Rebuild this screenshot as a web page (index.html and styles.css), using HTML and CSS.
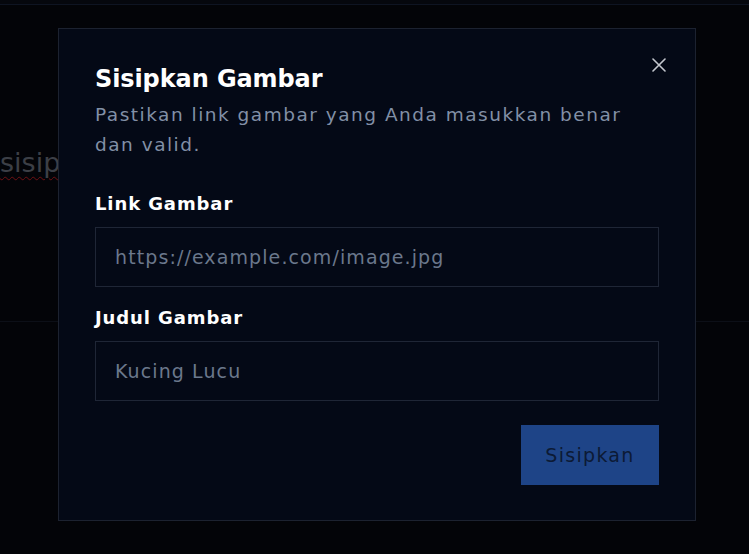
FILE: index.html
```html
<!DOCTYPE html>
<html lang="id">
<head>
<meta charset="utf-8">
<title>Sisipkan Gambar</title>
<link rel="stylesheet" href="styles.css">
</head>
<body>
<div class="page">
  <header class="topbar"></header>
  <section class="editor">
    <p class="editor-text"><span class="misspelled">sisipkan</span></p>
  </section>
  <div class="editor-footer"></div>
</div>

<div class="overlay">
  <div class="modal" role="dialog" aria-labelledby="modal-title">
    <button class="close" aria-label="Tutup">
      <svg width="14" height="14" viewBox="0 0 14 14"><path d="M1 1L13 13M13 1L1 13" stroke="currentColor" stroke-width="1.6" stroke-linecap="round"/></svg>
    </button>
    <h2 id="modal-title" class="title">Sisipkan Gambar</h2>
    <p class="desc">Pastikan link gambar yang Anda masukkan benar<br>dan valid.</p>
    <label class="field">
      <span class="label">Link Gambar</span>
      <input class="input" type="text" placeholder="https://example.com/image.jpg">
    </label>
    <label class="field">
      <span class="label">Judul Gambar</span>
      <input class="input" type="text" placeholder="Kucing Lucu">
    </label>
    <div class="actions">
      <button class="submit">Sisipkan</button>
    </div>
  </div>
</div>
</body>
</html>
```

FILE: styles.css
```css
* { box-sizing: border-box; }
html, body {
  margin: 0;
  height: 100%;
  background: #030408;
  font-family: "DejaVu Sans", "Open Sans", sans-serif;
  overflow: hidden;
}
.page {
  display: flex;
  flex-direction: column;
  height: 100%;
}
.topbar {
  height: 5px;
  background: #05070d;
  border-bottom: 1px solid #0e1422;
}
.editor {
  height: 317px;
  border-bottom: 1px solid #0c0f17;
  padding-top: 140px;
}
.editor-text {
  margin: 0;
  font-size: 27px;
  color: #3c3f46;
  line-height: 36px;
  white-space: nowrap;
}
.misspelled {
  text-decoration: underline wavy #6e0f12;
  text-decoration-thickness: 1px;
  text-underline-offset: 4px;
}
.overlay {
  position: fixed;
  inset: 0;
  display: flex;
  align-items: flex-start;
  justify-content: flex-start;
  padding: 28px 0 0 58px;
}
.modal {
  position: relative;
  width: 638px;
  height: 493px;
  background: #040916;
  border: 1px solid #1c2230;
  padding: 33px 36px 35px 36px;
  display: flex;
  flex-direction: column;
}
.close {
  position: absolute;
  top: 29px;
  right: 29px;
  width: 14px;
  height: 14px;
  padding: 0;
  border: 0;
  background: none;
  color: #c5c8cf;
  display: flex;
}
.title {
  margin: 0;
  font-size: 24px;
  line-height: 34px;
  font-weight: 700;
  color: #ffffff;
  letter-spacing: -0.1px;
}
.desc {
  margin: 4px 0 0;
  font-size: 18.5px;
  line-height: 30px;
  color: #8290a6;
  letter-spacing: 1.5px;
}
.field {
  display: flex;
  flex-direction: column;
  margin-top: 30px;
}
.field + .field { margin-top: 17px; }
.label {
  font-size: 18px;
  line-height: 28px;
  font-weight: 700;
  color: #ffffff;
  margin-bottom: 9px;
  letter-spacing: 0.9px;
}
.input {
  height: 60px;
  background: transparent;
  border: 1px solid #1f2636;
  padding: 0 19px;
  font-family: inherit;
  font-size: 19px;
  color: #ffffff;
  outline: none;
  letter-spacing: 1.1px;
}
.input::placeholder { color: #6b788c; }
.actions {
  margin-top: auto;
  display: flex;
  justify-content: flex-end;
}
.submit {
  width: 138px;
  height: 60px;
  border: 0;
  background: #1e4487;
  color: #0c1a35;
  font-family: inherit;
  font-size: 19px;
  letter-spacing: 1.3px;
}
```
